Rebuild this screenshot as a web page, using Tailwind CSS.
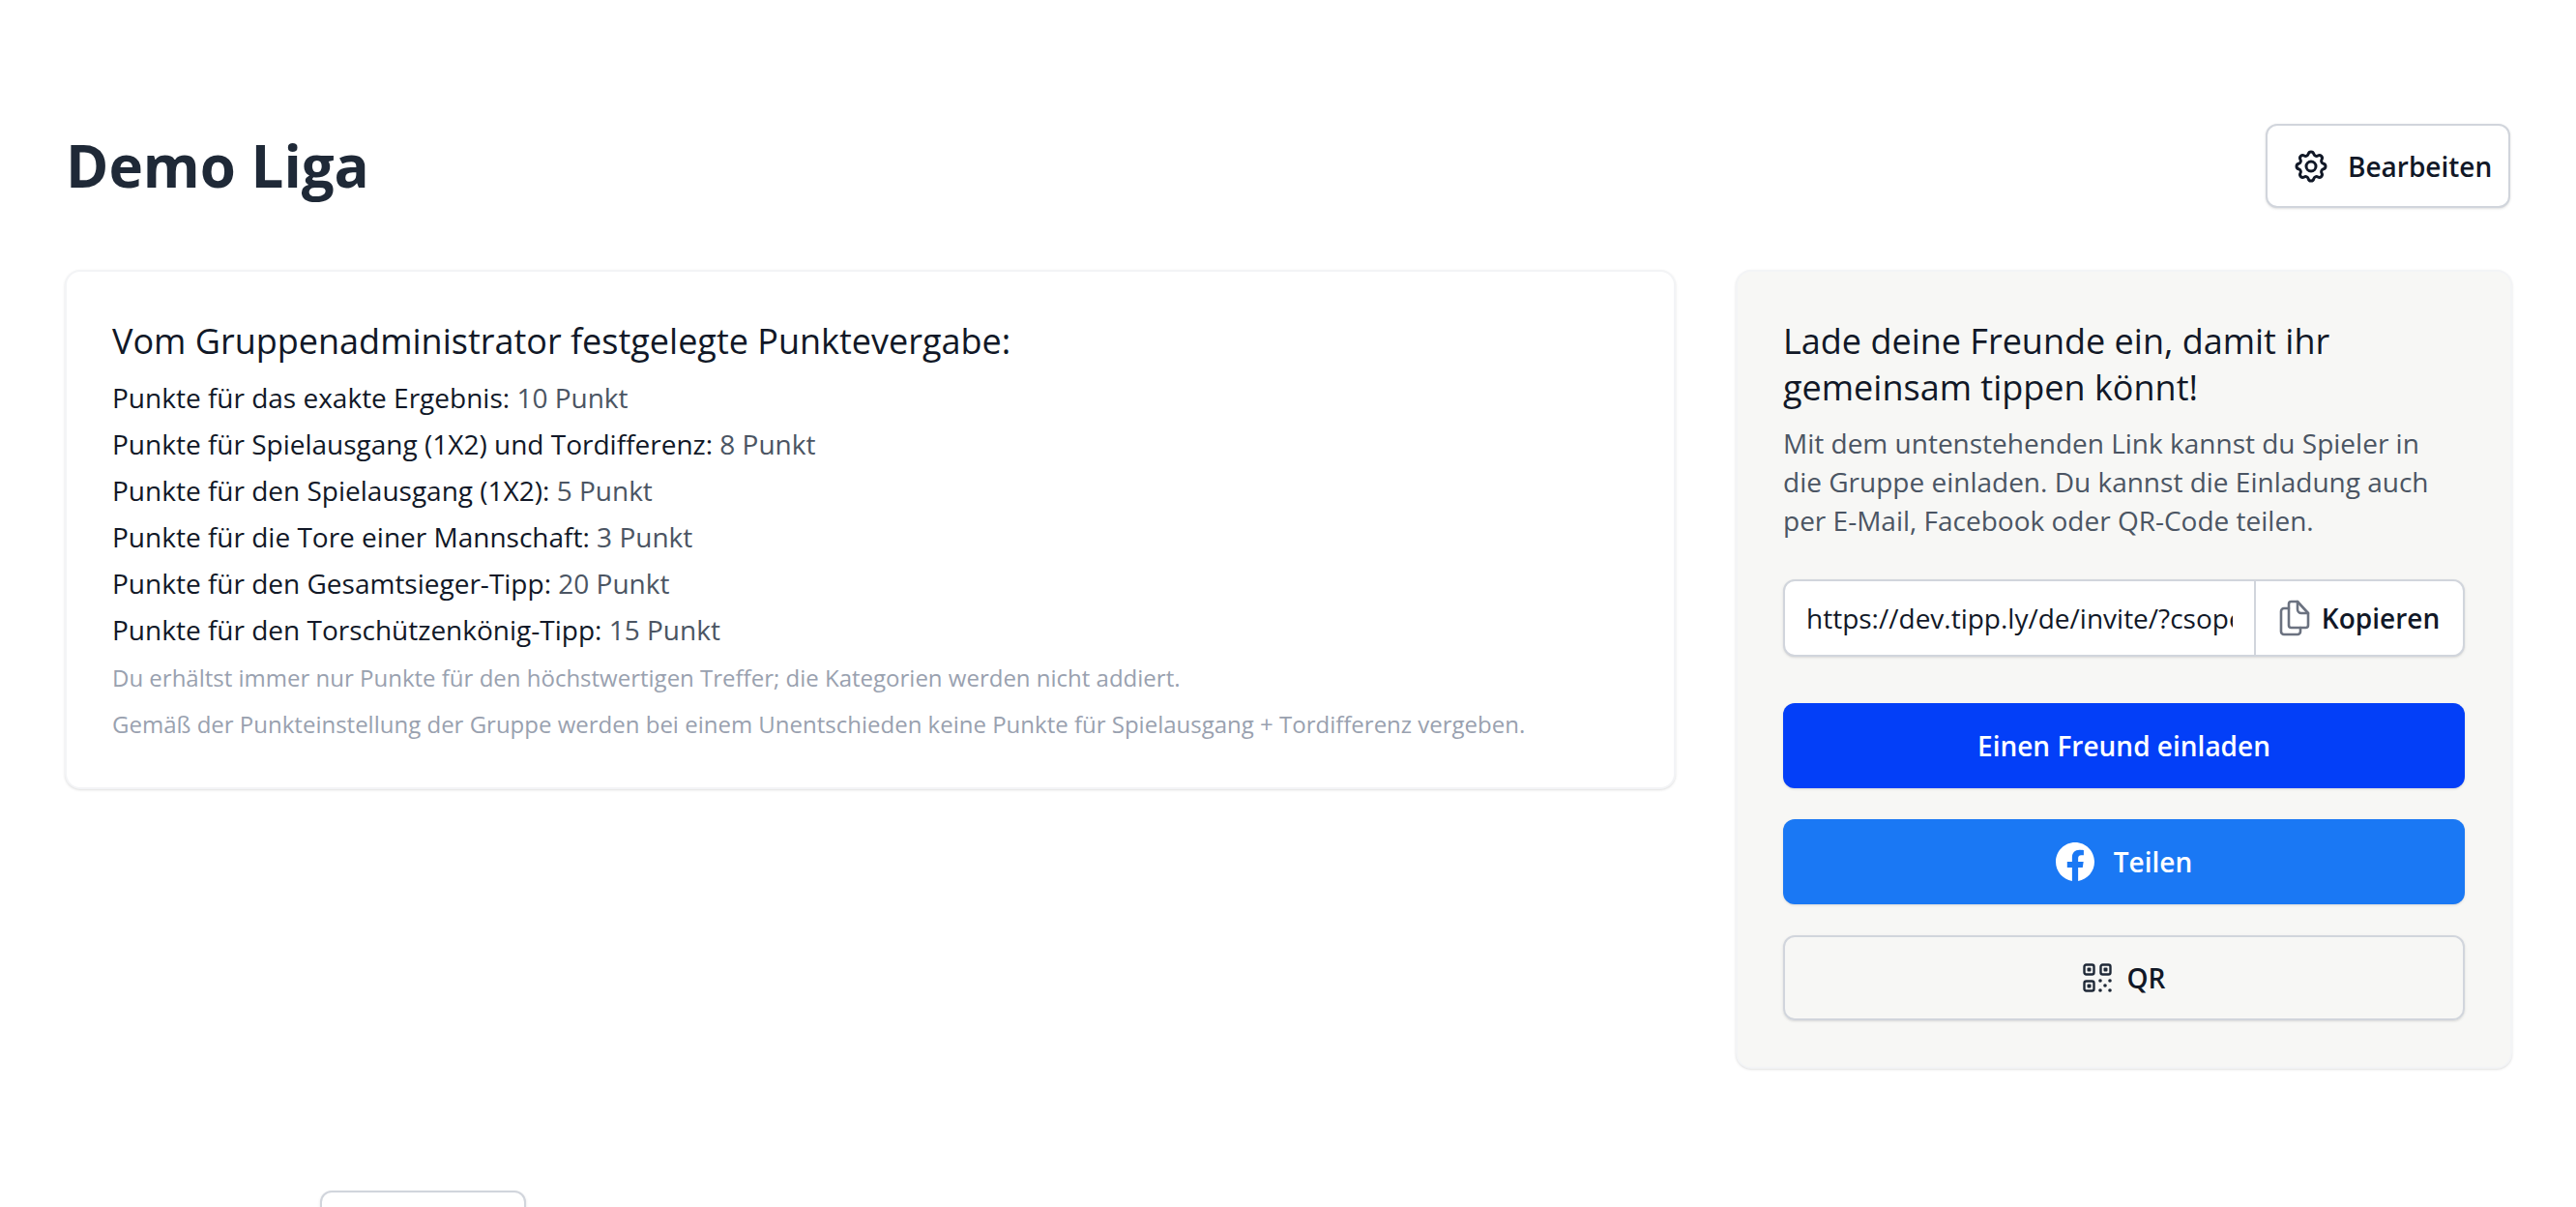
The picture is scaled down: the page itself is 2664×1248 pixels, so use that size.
<!DOCTYPE html>
<html lang="de">
<head>
<meta charset="utf-8">
<title>Demo Liga</title>
<script src="https://cdn.jsdelivr.net/npm/@tailwindcss/browser@4"></script>
</head>
<body class="h-screen overflow-hidden bg-white font-['Open_Sans',sans-serif]">
<main class="pl-[67px] pr-[66px] pt-[128px]">
  <header class="flex items-center justify-between h-[87px] mb-[64px]">
    <h1 class="pl-px text-[60px] leading-[87px] font-bold text-[#1f2937]">Demo Liga</h1>
    <button class="mr-[2px] flex items-center h-[87px] w-[253px] pl-[25px] rounded-xl border-2 border-gray-300 bg-white shadow-sm text-[28px] font-semibold text-[#111827]">
      <svg class="w-[40px] h-[40px] mr-[18px]" viewBox="0 0 24 24" fill="none" stroke="#111827" stroke-width="1.8" stroke-linecap="round" stroke-linejoin="round"><path d="M10.325 4.317c.426-1.756 2.924-1.756 3.35 0a1.724 1.724 0 002.573 1.066c1.543-.94 3.31.826 2.37 2.37a1.724 1.724 0 001.065 2.572c1.756.426 1.756 2.924 0 3.35a1.724 1.724 0 00-1.066 2.573c.94 1.543-.826 3.31-2.37 2.37a1.724 1.724 0 00-2.572 1.065c-.426 1.756-2.924 1.756-3.35 0a1.724 1.724 0 00-2.573-1.066c-1.543.94-3.31-.826-2.37-2.37a1.724 1.724 0 00-1.065-2.572c-1.756-.426-1.756-2.924 0-3.35a1.724 1.724 0 001.066-2.573c-.94-1.543.826-3.31 2.37-2.37.996.608 2.296.07 2.572-1.065z"/><path d="M15 12a3 3 0 11-6 0 3 3 0 016 0z"/></svg>
      Bearbeiten
    </button>
  </header>
  <div class="flex items-start gap-[62px]">
    <section class="w-[1666px] rounded-2xl border-2 border-gray-100 bg-white shadow-sm px-[47px] pt-[48px] pb-[41px]">
      <h2 class="text-[36px] leading-[48px] mb-[10px] text-[#111827]">Vom Gruppenadministrator festgelegte Punktevergabe:</h2>
      <p class="text-[28px] leading-[48px] text-[#111827]">Punkte für das exakte Ergebnis: <span class="text-[#4b5563]">10 Punkt</span></p>
      <p class="text-[28px] leading-[48px] text-[#111827]">Punkte für Spielausgang (1X2) und Tordifferenz: <span class="text-[#4b5563]">8 Punkt</span></p>
      <p class="text-[28px] leading-[48px] text-[#111827]">Punkte für den Spielausgang (1X2): <span class="text-[#4b5563]">5 Punkt</span></p>
      <p class="text-[28px] leading-[48px] text-[#111827]">Punkte für die Tore einer Mannschaft: <span class="text-[#4b5563]">3 Punkt</span></p>
      <p class="text-[28px] leading-[48px] text-[#111827]">Punkte für den Gesamtsieger-Tipp: <span class="text-[#4b5563]">20 Punkt</span></p>
      <p class="text-[28px] leading-[48px] text-[#111827]">Punkte für den Torschützenkönig-Tipp: <span class="text-[#4b5563]">15 Punkt</span></p>
      <p class="mt-[2px] text-[24px] leading-[48px] text-gray-400">Du erhältst immer nur Punkte für den höchstwertigen Treffer; die Kategorien werden nicht addiert.</p>
      <p class="text-[24px] leading-[48px] text-gray-400">Gemäß der Punkteinstellung der Gruppe werden bei einem Unentschieden keine Punkte für Spielausgang + Tordifferenz vergeben.</p>
    </section>
    <aside class="w-[803px] h-[826px] rounded-2xl border-2 border-gray-100 bg-[#f7f7f5] shadow-sm px-[47px] pt-[48px]">
      <h2 class="text-[36px] leading-[48px] text-[#111827]">Lade deine Freunde ein, damit ihr gemeinsam tippen könnt!</h2>
      <p class="mt-[13px] text-[28px] leading-[40px] text-[#4b5563]">Mit dem untenstehenden Link kannst du Spieler in die Gruppe einladen. Du kannst die Einladung auch per E-Mail, Facebook oder QR-Code teilen.</p>
      <div class="mt-[41px] flex h-[80px] rounded-xl border-2 border-gray-300 bg-white shadow-sm">
        <div class="flex-1 min-w-0 pl-[22px] pr-[22px] flex items-center">
          <span class="block overflow-hidden whitespace-nowrap text-[28px] text-[#111827]">https://dev.tipp.ly/de/invite/?csope</span>
        </div>
        <button class="w-[216px] shrink-0 flex items-center justify-center gap-[12px] border-l-2 border-gray-300 text-[28px] font-semibold text-[#111827]">
          <svg class="w-[32px] h-[38px]" viewBox="14 12 32 38" fill="none" stroke="#6b7280" stroke-width="2.6" stroke-linejoin="round" stroke-linecap="round"><path d="M26.5 14H33L44 26V38.5a2.5 2.5 0 0 1-2.5 2.5H26.5a2.5 2.5 0 0 1-2.5-2.5V16.5a2.5 2.5 0 0 1 2.5-2.5z"/><path d="M33 14v8a4 4 0 0 0 4 4h7"/><path d="M24 21H19a3 3 0 0 0-3 3V45a3 3 0 0 0 3 3H33a3 3 0 0 0 3-3V41"/></svg>
          Kopieren
        </button>
      </div>
      <button class="mt-[48px] flex w-full h-[88px] items-center justify-center rounded-xl bg-[#033ff8] text-[28px] font-semibold text-white shadow-sm">Einen Freund einladen</button>
      <button class="mt-[32px] flex w-full h-[88px] items-center justify-center gap-[20px] rounded-xl bg-[#1a78f4] text-[28px] font-semibold text-white shadow-sm">
        <svg class="w-[40px] h-[40px]" viewBox="0 0 24 24" fill="#fff"><path d="M24 12.073C24 5.405 18.627 0 12 0S0 5.405 0 12.073c0 6.026 4.388 11.02 10.125 11.927v-8.437H7.078v-3.49h3.047V9.413c0-3.026 1.792-4.697 4.533-4.697 1.313 0 2.686.236 2.686.236v2.97h-1.513c-1.491 0-1.956.93-1.956 1.886v2.265h3.328l-.532 3.49h-2.796V24C19.612 23.093 24 18.099 24 12.073z"/></svg>
        Teilen
      </button>
      <button class="mt-[32px] flex w-full h-[88px] items-center justify-center gap-[16px] rounded-xl border-2 border-gray-300 text-[28px] font-semibold text-[#111827] shadow-sm">
        <svg class="w-[30px] h-[30px]" viewBox="0 0 30 30" fill="none" stroke="#1f2937" stroke-width="2.4"><rect x="1.5" y="1.5" width="10" height="10" rx="2"/><rect x="18.5" y="1.5" width="10" height="10" rx="2"/><rect x="1.5" y="18.5" width="10" height="10" rx="2"/><g fill="#1f2937" stroke="none"><rect x="4.5" y="4.5" width="4" height="4" rx="1"/><rect x="21.5" y="4.5" width="4" height="4" rx="1"/><rect x="4.5" y="21.5" width="4" height="4" rx="1"/><circle cx="18" cy="18" r="1.8"/><circle cx="28" cy="18" r="1.8"/><circle cx="23" cy="23" r="1.8"/><circle cx="18" cy="28" r="1.8"/><circle cx="28" cy="28" r="1.8"/></g></svg>
        QR
      </button>
    </aside>
  </div>
  <div class="mt-[126px] ml-[264px] w-[213px] h-[60px] rounded-xl border-2 border-gray-300 bg-white shadow-sm"></div>
</main>
</body>
</html>
